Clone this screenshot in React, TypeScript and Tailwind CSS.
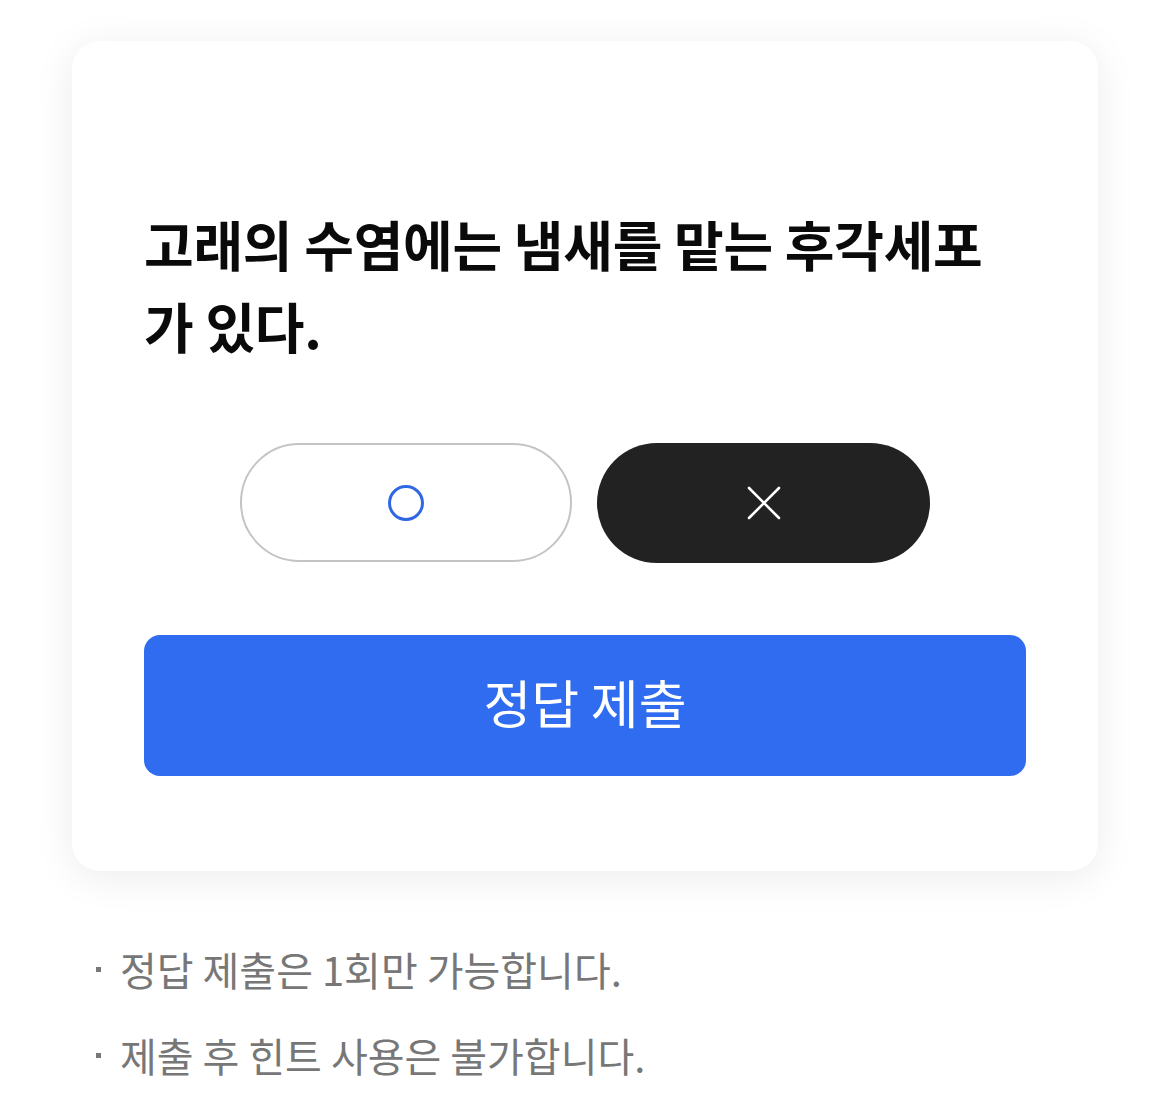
import React from "react";

export default function App() {
  return (
    <div className="min-h-[1109px] w-[1170px] bg-white" style={{ fontFamily: '"Noto Sans CJK KR", "Noto Sans", sans-serif' }}>
      <div className="pt-[41px] px-[72px]">
        <div className="rounded-[28px] bg-white shadow-[0_6px_40px_rgba(0,0,0,0.08)] px-[72px] pt-[162px] pb-[95px]">
          <h1 className="text-[54px] leading-[82px] font-bold tracking-[-0.005em] text-[#0a0a0a]">
            고래의 수염에는 냄새를 맡는 후각세포
            <br />가 있다.
          </h1>
          <div className="mt-[76px] flex justify-center gap-[25px]">
            <button className="w-[332px] h-[119px] rounded-full border-2 border-[#c4c4c4] bg-white flex items-center justify-center">
              <svg width="40" height="40" viewBox="0 0 40 40">
                <circle cx="20" cy="20" r="16.5" fill="none" stroke="#3068e4" strokeWidth="3" />
              </svg>
            </button>
            <button className="w-[333px] h-[120px] rounded-full bg-[#222222] flex items-center justify-center">
              <svg width="36" height="36" viewBox="0 0 36 36">
                <path d="M3 3 L33 33 M33 3 L3 33" stroke="#fff" strokeWidth="2.6" strokeLinecap="round" />
              </svg>
            </button>
          </div>
          <button className="mt-[72px] w-full h-[141px] rounded-[16px] bg-[#306cf0] text-white text-[52px] font-normal flex items-center justify-center pb-[8px]">
            정답 제출
          </button>
        </div>
      </div>
      <div className="pl-[96px] pt-[55px] text-[40px] text-[#777] leading-[86px]">
        <div className="flex items-center">
          <span className="w-[5px] h-[5px] bg-[#777] mr-[19px]" />
          <span>정답 제출은 1회만 가능합니다.</span>
        </div>
        <div className="flex items-center">
          <span className="w-[5px] h-[5px] bg-[#777] mr-[19px]" />
          <span>제출 후 힌트 사용은 불가합니다.</span>
        </div>
      </div>
    </div>
  );
}
